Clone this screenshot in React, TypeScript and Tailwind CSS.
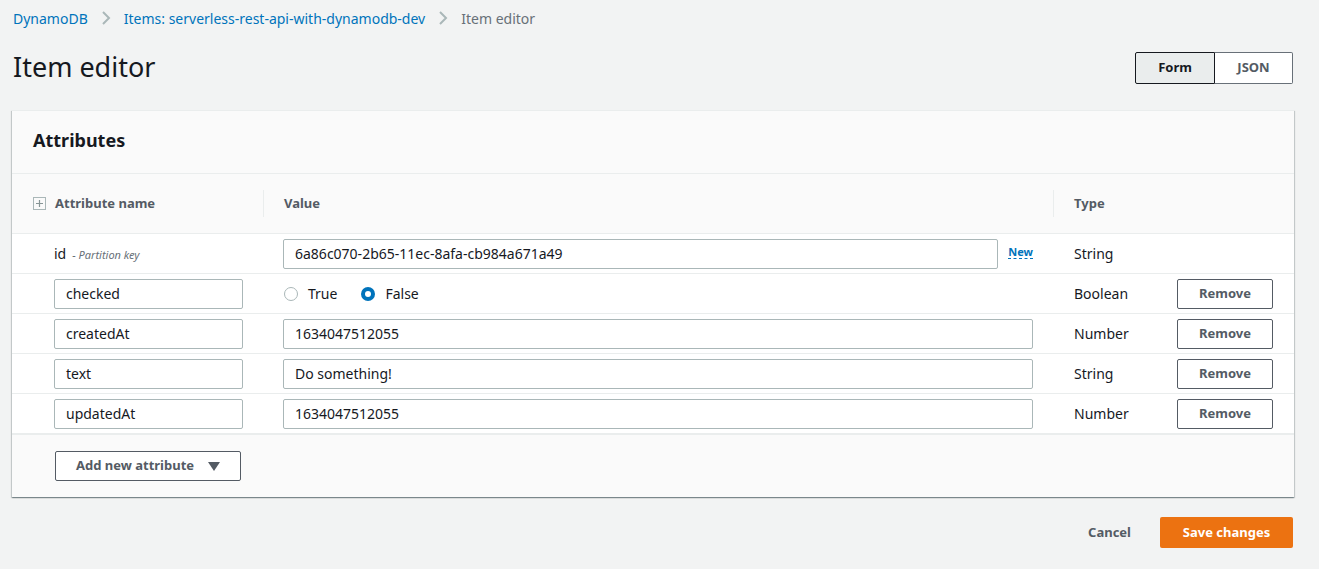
import React from 'react';

const font = { fontFamily: '"Noto Sans", "Open Sans", Arial, sans-serif' };

type Row = {
  name: string;
  value: string;
  type: string;
  key?: boolean;
  bool?: boolean;
};

const rows: Row[] = [
  { name: 'id', value: '6a86c070-2b65-11ec-8afa-cb984a671a49', type: 'String', key: true },
  { name: 'checked', value: 'false', type: 'Boolean', bool: true },
  { name: 'createdAt', value: '1634047512055', type: 'Number' },
  { name: 'text', value: 'Do something!', type: 'String' },
  { name: 'updatedAt', value: '1634047512055', type: 'Number' },
];

const Chevron = () => (
  <svg width="10" height="16" viewBox="0 0 10 16" className="mx-[13px]">
    <path d="M2 2l6 6-6 6" fill="none" stroke="#aab7b8" strokeWidth="2" />
  </svg>
);

const TextBox = ({ value, className }: { value: string; className: string }) => (
  <div
    className={`h-[30px] flex items-center px-[11px] bg-white border border-[#aab7b8] rounded-[2px] text-[14px] text-[#16191f] ${className}`}
  >
    {value}
  </div>
);

const Radio = ({ checked, label }: { checked: boolean; label: string }) => (
  <div className="flex items-center gap-[10px]">
    {checked ? (
      <span className="w-[14px] h-[14px] rounded-full bg-[#0073bb] flex items-center justify-center">
        <span className="w-[6px] h-[6px] rounded-full bg-white" />
      </span>
    ) : (
      <span className="w-[14px] h-[14px] rounded-full border border-[#aab7b8] bg-white" />
    )}
    <span className="text-[14px] text-[#16191f]">{label}</span>
  </div>
);

export default function App() {
  return (
    <div className="min-h-screen w-full bg-[#f2f3f3] pl-[12px] pr-[25px]" style={font}>
      {/* Breadcrumbs */}
      <div className="flex items-center h-[36px] pl-[1px] text-[14px]">
        <span className="text-[#0073bb]">DynamoDB</span>
        <Chevron />
        <span className="text-[#0073bb]">Items: serverless-rest-api-with-dynamodb-dev</span>
        <Chevron />
        <span className="text-[#687078]">Item editor</span>
      </div>

      {/* Title row */}
      <div className="flex items-center justify-between h-[62px] pl-[1px]">
        <h1 className="text-[27px] leading-none text-[#16191f] -mt-[2px]">Item editor</h1>
        <div className="flex h-[32px] mt-[1px] mr-[1px]">
          <button className="w-[80px] bg-[#eaeded] border border-[#16191f] rounded-l-[2px] text-[13px] font-bold text-[#16191f]">
            Form
          </button>
          <button className="w-[78px] bg-white border border-l-0 border-[#687078] rounded-r-[2px] text-[13px] font-bold text-[#545b64]">
            JSON
          </button>
        </div>
      </div>

      {/* Panel */}
      <div className="mt-[12px] border-t border-[#eaeded] bg-white shadow-[0_1px_1px_0_rgba(0,28,36,0.3),1px_1px_1px_0_rgba(0,28,36,0.15),-1px_1px_1px_0_rgba(0,28,36,0.15)]">
        <div className="h-[63px] bg-[#fafafa] border-b border-[#eaeded] flex items-center pl-[21px]">
          <h2 className="text-[18px] font-bold text-[#16191f] -mt-[3px]">Attributes</h2>
        </div>

        {/* Table header */}
        <div className="grid grid-cols-[251px_790px_1fr] h-[60px] bg-[#fafafa] border-b border-[#eaeded] text-[13px] font-bold text-[#545b64]">
          <div className="flex items-center pl-[21px] gap-[9px]">
            <span className="w-[13px] h-[13px] border border-[#aab7b8] flex items-center justify-center">
              <svg width="7" height="7" viewBox="0 0 7 7">
                <path d="M3.5 0v7M0 3.5h7" stroke="#879596" strokeWidth="1.2" />
              </svg>
            </span>
            <span>Attribute name</span>
          </div>
          <div className="flex items-center pl-[20px] border-l border-[#eaeded] my-[16px]">Value</div>
          <div className="flex items-center pl-[20px] border-l border-[#eaeded] my-[16px]">Type</div>
        </div>

        {/* Rows */}
        {rows.map((r) => (
          <div
            key={r.name}
            className="grid grid-cols-[251px_790px_1fr] h-[40px] border-b border-[#eaeded] items-center"
          >
            <div className="pl-[42px] pr-[20px]">
              {r.key ? (
                <div className="flex items-baseline gap-[6px]">
                  <span className="text-[14px] text-[#16191f]">{r.name}</span>
                  <span className="text-[11px] italic text-[#687078]">- Partition key</span>
                </div>
              ) : (
                <TextBox value={r.name} className="w-full" />
              )}
            </div>
            <div className="pl-[20px] pr-[20px]">
              {r.bool ? (
                <div className="flex items-center gap-[24px] pl-[1px]">
                  <Radio checked={false} label="True" />
                  <Radio checked={true} label="False" />
                </div>
              ) : r.key ? (
                <div className="flex items-center">
                  <TextBox value={r.value} className="flex-1" />
                  <span className="ml-[10px] text-[11px] font-bold text-[#0073bb] border-b border-dashed border-[#0073bb] leading-[13px] -mt-[4px]">
                    New
                  </span>
                </div>
              ) : (
                <TextBox value={r.value} className="w-full" />
              )}
            </div>
            <div className="flex items-center justify-between pl-[21px] pr-[21px]">
              <span className="text-[14px] text-[#16191f]">{r.type}</span>
              {!r.key && (
                <button className="w-[96px] h-[30px] border border-[#545b64] rounded-[2px] bg-white text-[13px] font-bold text-[#545b64]">
                  Remove
                </button>
              )}
            </div>
          </div>
        ))}

        {/* Footer */}
        <div className="bg-[#fafafa] h-[63px] flex items-center pl-[43px] border-t border-[#eaeded]">
          <button className="w-[186px] h-[30px] border border-[#545b64] rounded-[2px] bg-white flex items-center justify-center gap-[14px] text-[13px] font-bold text-[#545b64]">
            <span>Add new attribute</span>
            <svg width="12" height="9" viewBox="0 0 12 9">
              <path d="M0 0h12L6 9z" fill="#545b64" />
            </svg>
          </button>
        </div>
      </div>

      {/* Actions */}
      <div className="flex justify-end items-center mt-[20px] gap-[29px] pr-[1px]">
        <button className="text-[13px] font-bold text-[#545b64]">Cancel</button>
        <button className="w-[133px] h-[31px] bg-[#ec7211] rounded-[2px] text-[13px] font-bold text-white">
          Save changes
        </button>
      </div>
    </div>
  );
}
